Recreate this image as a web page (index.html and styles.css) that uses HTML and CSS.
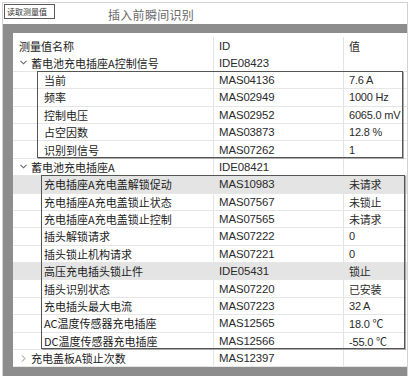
FILE: index.html
```html
<!DOCTYPE html>
<html lang="zh">
<head>
<meta charset="utf-8">
<link rel="stylesheet" href="styles.css">
</head>
<body>
<div class="window">
  <div class="toolbar">
    <div class="btn">读取测量值</div>
    <div class="title">插入前瞬间识别</div>
  </div>
  <div class="frame">
    <div class="table">
      <div class="row head"><div class="c name">测量值名称</div><div class="c id">ID</div><div class="c val">值</div></div>
      <div class="row grp"><div class="c name"><svg class="chev" width="7" height="5" viewBox="0 0 7 5"><polyline points="0.5,0.8 3.5,3.8 6.5,0.8" fill="none" stroke="#666" stroke-width="1.1"/></svg>蓄电池充电插座A控制信号</div><div class="c id">IDE08423</div><div class="c val"></div></div>
      <div class="box box1">
        <div class="row child"><div class="c name">当前</div><div class="c id">MAS04136</div><div class="c val">7.6 A</div></div>
        <div class="row child"><div class="c name">频率</div><div class="c id">MAS02949</div><div class="c val">1000 Hz</div></div>
        <div class="row child"><div class="c name">控制电压</div><div class="c id">MAS02952</div><div class="c val">6065.0 mV</div></div>
        <div class="row child"><div class="c name">占空因数</div><div class="c id">MAS03873</div><div class="c val">12.8 %</div></div>
        <div class="row child"><div class="c name">识别到信号</div><div class="c id">MAS07262</div><div class="c val">1</div></div>
      </div>
      <div class="row grp"><div class="c name"><svg class="chev" width="7" height="5" viewBox="0 0 7 5"><polyline points="0.5,0.8 3.5,3.8 6.5,0.8" fill="none" stroke="#666" stroke-width="1.1"/></svg>蓄电池充电插座A</div><div class="c id">IDE08421</div><div class="c val"></div></div>
      <div class="box box2">
        <div class="row child sel"><div class="c name">充电插座A充电盖解锁促动</div><div class="c id">MAS10983</div><div class="c val">未请求</div></div>
        <div class="row child"><div class="c name">充电插座A充电盖锁止状态</div><div class="c id">MAS07567</div><div class="c val">未锁止</div></div>
        <div class="row child"><div class="c name">充电插座A充电盖锁止控制</div><div class="c id">MAS07565</div><div class="c val">未请求</div></div>
        <div class="row child"><div class="c name">插头解锁请求</div><div class="c id">MAS07222</div><div class="c val">0</div></div>
        <div class="row child"><div class="c name">插头锁止机构请求</div><div class="c id">MAS07221</div><div class="c val">0</div></div>
        <div class="row child sel"><div class="c name">高压充电插头锁止件</div><div class="c id">IDE05431</div><div class="c val">锁止</div></div>
        <div class="row child"><div class="c name">插头识别状态</div><div class="c id">MAS07220</div><div class="c val">已安装</div></div>
        <div class="row child"><div class="c name">充电插头最大电流</div><div class="c id">MAS07223</div><div class="c val">32 A</div></div>
        <div class="row child"><div class="c name">AC温度传感器充电插座</div><div class="c id">MAS12565</div><div class="c val">18.0 ℃</div></div>
        <div class="row child"><div class="c name">DC温度传感器充电插座</div><div class="c id">MAS12566</div><div class="c val">-55.0 ℃</div></div>
      </div>
      <div class="row grp"><div class="c name"><svg class="chev right" width="5" height="7" viewBox="0 0 5 7"><polyline points="1,0.5 4,3.5 1,6.5" fill="none" stroke="#888" stroke-width="1"/></svg>充电盖板A锁止次数</div><div class="c id">MAS12397</div><div class="c val"></div></div>
    </div>
  </div>
</div>
</body>
</html>
```

FILE: styles.css
```css
html, body {
  margin: 0;
  padding: 0;
  background: #fff;
}
body {
  font-family: "Noto Sans CJK SC", "Liberation Sans", sans-serif;
  color: #1a1a1a;
}
.window {
  margin: 2px 0 0 2px;
  width: 406px;
  height: 374px;
  border-top: 1px solid #d2d2d2;
  border-left: 1px solid #d2d2d2;
  border-right: 1px solid #d2d2d2;
  box-sizing: border-box;
  display: flex;
  flex-direction: column;
  overflow: hidden;
}
.toolbar {
  height: 21px;
  display: flex;
  align-items: flex-start;
  flex: none;
}
.btn {
  margin: 1px 0 0 1px;
  width: 51px;
  height: 15px;
  box-sizing: border-box;
  border: 1px solid #5a5a5a;
  font-size: 8px;
  line-height: 13px;
  padding-left: 2px;
  color: #333;
  white-space: nowrap;
}
.title {
  margin: 5px 0 0 53px;
  font-size: 12px;
  line-height: 14px;
  color: #6a6a6a;
  letter-spacing: 0.3px;
}
.frame {
  flex: 1;
  background: #8d8d8d;
  padding: 9px 0 9px 10px;
  display: flex;
}
.table {
  flex: 1;
  background: #fff;
  padding-top: 4px;
  overflow: hidden;
}
.row {
  height: 17.4px;
  display: flex;
  align-items: stretch;
  box-sizing: border-box;
  border-bottom: 1px solid #e6e6e6;
  font-size: 11px;
}
.row.head { border-bottom: none; }
.row.sel { background: #e4e4e4; }
.c {
  display: flex;
  align-items: center;
  white-space: nowrap;
}
.name {
  width: 200px;
  padding-left: 6px;
  box-sizing: border-box;
}
.id {
  width: 130px;
  padding-left: 5px;
  box-sizing: border-box;
  border-left: 1px solid #e3e3e3;
  font-family: "Liberation Sans", sans-serif;
  font-size: 11.4px;
  color: #2a2a2a;
  letter-spacing: -0.1px;
}
.val {
  flex: 1;
  padding-left: 5px;
  border-left: 1px solid #e3e3e3;
  font-family: "Liberation Sans", "Noto Sans CJK SC", sans-serif;
  font-size: 11px;
  color: #2a2a2a;
  letter-spacing: -0.2px;
}
.head .val { font-family: "Noto Sans CJK SC", sans-serif; }
.grp .name { padding-left: 7px; }
.child .name { padding-left: 31px; }
.chev {
  margin-right: 4px;
  flex: none;
}
.chev.right {
  margin-left: 1px;
  margin-right: 5px;
}
.box {
  position: relative;
}
.box::after {
  content: "";
  position: absolute;
  border: 1px solid #555;
  box-shadow: 1px 1px 0 #aaa;
  pointer-events: none;
}
.box1::after { left: 24px; right: 4px; top: -1px; bottom: 1px; }
.box2::after { left: 28px; right: 2px; top: -1px; bottom: 1px; }
```
